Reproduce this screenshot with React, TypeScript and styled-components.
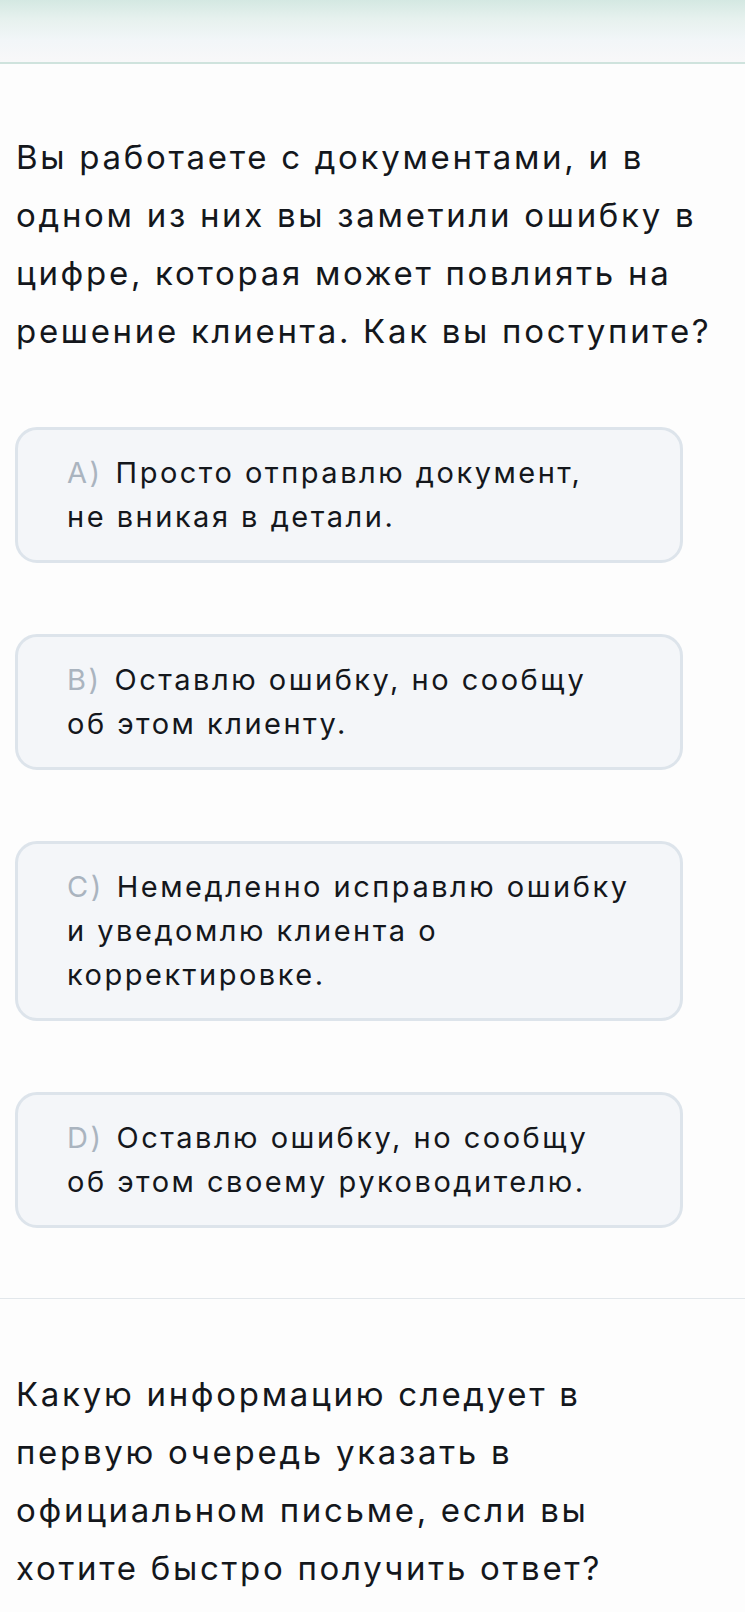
import React from "react";
import styled, { createGlobalStyle } from "styled-components";

const GlobalStyle = createGlobalStyle`
  html, body {
    margin: 0;
    padding: 0;
    background: #ffffff;
  }
  body {
    font-family: Inter, "Noto Sans", "Liberation Sans", sans-serif;
    -webkit-font-smoothing: antialiased;
  }
`;

const Page = styled.div`
  width: 745px;
  min-height: 1612px;
  background: #fdfdfd;
  overflow: hidden;
`;

const Header = styled.header`
  height: 62px;
  background: linear-gradient(180deg, #d4e8e2 0%, #e6f1ee 30%, #f2f6f8 65%, #f8f8f9 100%);
  border-bottom: 2px solid #cfe3dd;
`;

const Section = styled.section<{ $top: number }>`
  padding: ${(p) => p.$top}px 0 0 16px;
`;

const Question = styled.h2`
  margin: 0;
  font-size: 33px;
  line-height: 58px;
  font-weight: 400;
  color: #14171c;
  letter-spacing: 2.7px;
  white-space: nowrap;
`;

const OptionList = styled.div`
  display: flex;
  flex-direction: column;
  gap: 71px;
  margin: 67px 0 0 -1px;
  width: 668px;
`;

const OptionCard = styled.div`
  box-sizing: border-box;
  border: 3px solid #dde4eb;
  border-radius: 22px;
  background: #f4f6f9;
  padding: 21px 20px 21px 49px;
  font-size: 29px;
  line-height: 44px;
  color: #14171c;
  letter-spacing: 2.5px;
  white-space: nowrap;
`;

const Label = styled.span`
  color: #aab4bf;
  margin-right: 13px;
`;

const Divider = styled.hr`
  margin: 70px 0 0 0;
  border: none;
  height: 1px;
  background: #e2e7eb;
`;

const options = [
  { key: "A)", lines: ["Просто отправлю документ,", "не вникая в детали."] },
  { key: "B)", lines: ["Оставлю ошибку, но сообщу", "об этом клиенту."] },
  { key: "C)", lines: ["Немедленно исправлю ошибку", "и уведомлю клиента о", "корректировке."] },
  { key: "D)", lines: ["Оставлю ошибку, но сообщу", "об этом своему руководителю."] },
];

const Lines: React.FC<{ lines: string[] }> = ({ lines }) => (
  <>
    {lines.map((l, i) => (
      <React.Fragment key={i}>
        {i > 0 && <br />}
        {l}
      </React.Fragment>
    ))}
  </>
);

export default function App() {
  return (
    <>
      <GlobalStyle />
      <Page>
        <Header />
        <Section $top={64}>
          <Question>
            <Lines
              lines={[
                "Вы работаете с документами, и в",
                "одном из них вы заметили ошибку в",
                "цифре, которая может повлиять на",
                "решение клиента. Как вы поступите?",
              ]}
            />
          </Question>
          <OptionList>
            {options.map((o) => (
              <OptionCard key={o.key}>
                <Label>{o.key}</Label>
                <Lines lines={o.lines} />
              </OptionCard>
            ))}
          </OptionList>
        </Section>
        <Divider />
        <Section $top={66}>
          <Question>
            <Lines
              lines={[
                "Какую информацию следует в",
                "первую очередь указать в",
                "официальном письме, если вы",
                "хотите быстро получить ответ?",
              ]}
            />
          </Question>
        </Section>
      </Page>
    </>
  );
}
